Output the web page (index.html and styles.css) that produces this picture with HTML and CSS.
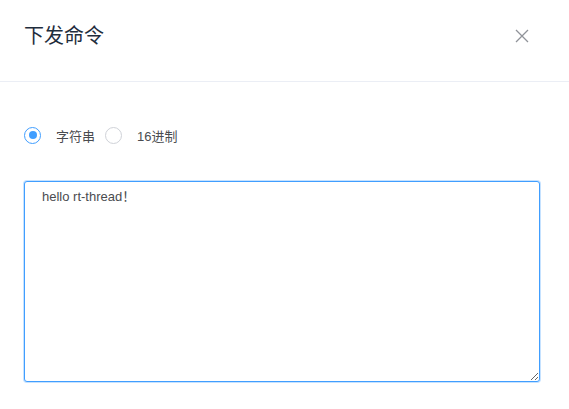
FILE: index.html
```html
<!DOCTYPE html>
<html lang="zh-CN">
<head>
    <meta charset="UTF-8">
    <title>下发命令</title>
    <link rel="stylesheet" href="styles.css">
</head>
<body>
<div class="dialog">
    <div class="dialog-header">
        <span class="dialog-title">下发命令</span>
        <button class="dialog-close" aria-label="关闭">
            <svg width="14" height="14" viewBox="0 0 14 14"><path d="M1 1L13 13M13 1L1 13" stroke="#909399" stroke-width="1.3" fill="none"/></svg>
        </button>
    </div>
    <div class="dialog-body">
        <div class="radio-group">
            <label class="radio checked"><span class="radio-inner"></span><span class="radio-label">字符串</span></label>
            <label class="radio"><span class="radio-inner"></span><span class="radio-label">16进制</span></label>
        </div>
        <textarea class="command-input">hello rt-thread！</textarea>
    </div>
</div>
</body>
</html>
```

FILE: styles.css
```css
/* Page */
body {
    margin: 0;
    background: #fff;
    font-family: "Liberation Sans", "Noto Sans CJK SC", sans-serif;
    color: #606266;
}

/* Dialog */
.dialog {
    width: 569px;
    height: 409px;
    background: #fff;
}

.dialog-header {
    padding: 0 24px;
    border-bottom: 1px solid #ebeef5;
    display: flex;
    align-items: center;
    justify-content: space-between;
    box-sizing: border-box;
    height: 82px;
}

.dialog-title {
    font-size: 20px;
    color: #1f2d3d;
    line-height: 24px;
    margin-top: -10px;
}

.dialog-close {
    background: none;
    border: none;
    padding: 0;
    margin: -10px 16px 0 0;
    cursor: pointer;
    display: flex;
}

.dialog-body {
    padding: 43px 29px 0 24px;
}

/* Radios */
.radio-group {
    display: flex;
    align-items: center;
    height: 20px;
    margin-bottom: 36px;
}

.radio {
    display: flex;
    align-items: center;
    margin-right: 10px;
    font-size: 13px;
    color: #4a4c50;
    cursor: pointer;
}

.radio-inner {
    width: 15px;
    height: 15px;
    border: 1px solid #cfd2d8;
    border-radius: 50%;
    box-sizing: content-box;
    position: relative;
}

.radio.checked .radio-inner {
    border-color: #409eff;
}

.radio.checked .radio-inner::after {
    content: "";
    position: absolute;
    width: 8px;
    height: 8px;
    border-radius: 50%;
    background: #409eff;
    left: 3.5px;
    top: 3.5px;
}

.radio-label {
    padding-left: 15px;
}

/* Textarea */
.command-input {
    display: block;
    width: 516px;
    height: 201px;
    box-sizing: border-box;
    padding: 6px 17px;
    border: 1px solid #409eff;
    border-radius: 3px;
    box-shadow: 0 0 0 1px #c6e2ff;
    font-family: "Liberation Sans", "Noto Sans CJK SC", sans-serif;
    font-size: 13px;
    line-height: 18px;
    color: #4a4c50;
    outline: none;
    resize: both;
}
```
